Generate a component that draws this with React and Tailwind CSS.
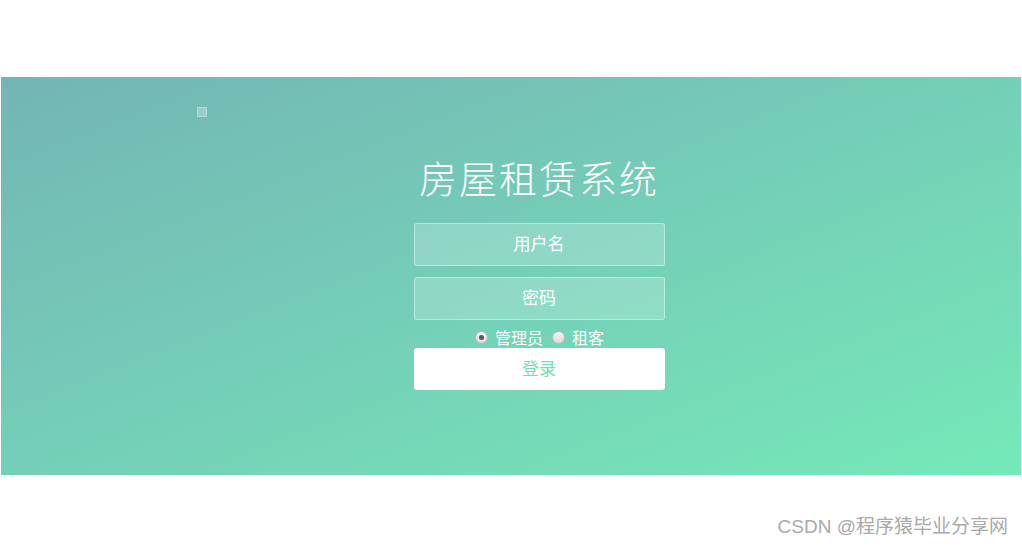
import React from "react";

function Radio({ checked, label }) {
  return (
    <label className="flex items-center gap-[7px]">
      <span className="flex h-[13px] w-[13px] items-center justify-center rounded-full border border-[#b9b9b9] bg-linear-to-b from-[#f4f4f4] to-[#dcdcdc]">
        {checked && <span className="h-[5px] w-[5px] rounded-full bg-[#5a5a5a]" />}
      </span>
      <span>{label}</span>
    </label>
  );
}

export default function App() {
  const cjk = { fontFamily: '"Noto Sans CJK SC", "Liberation Sans", sans-serif' };
  return (
    <div className="min-h-[548px] w-full bg-white" style={cjk}>
      <div className="h-[77px]" />
      <div className="relative mx-px h-[398px] overflow-hidden bg-linear-to-br from-[#73b5b5] to-[#75e9b8]">
        <div className="absolute left-[196px] top-[30px] h-[10px] w-[10px] border border-white/30 bg-white/25" />
        <div className="flex flex-col items-center pl-[56px] pt-[76px]">
          <h1 className="text-[38px] font-light leading-[48px] tracking-[2px] text-white">房屋租赁系统</h1>
          <div className="mt-[22px] flex h-[43px] w-[251px] items-center justify-center rounded-[3px] border border-white/40 bg-white/20 pb-[3px] text-[17px] text-white">
            用户名
          </div>
          <div className="mt-[11px] flex h-[43px] w-[251px] items-center justify-center rounded-[3px] border border-white/40 bg-white/20 pb-[3px] text-[17px] text-white">
            密码
          </div>
          <div className="mt-[7px] flex h-[21px] items-center gap-[9px] pl-[1px] text-[16px] leading-[21px] text-white">
            <Radio checked label="管理员" />
            <Radio label="租客" />
          </div>
          <div className="flex h-[42px] w-[251px] items-center justify-center rounded-[3px] bg-white pb-[2px] text-[17px] text-[#6fe0ae]">
            登录
          </div>
        </div>
      </div>
      <div className="flex justify-end pr-[14px] pt-[41px]">
        <span className="text-[19px] leading-[22px] text-[#a9a9a9]" style={{ fontFamily: '"Liberation Sans", "Noto Sans CJK SC", sans-serif' }}>
          CSDN @程序猿毕业分享网
        </span>
      </div>
    </div>
  );
}
